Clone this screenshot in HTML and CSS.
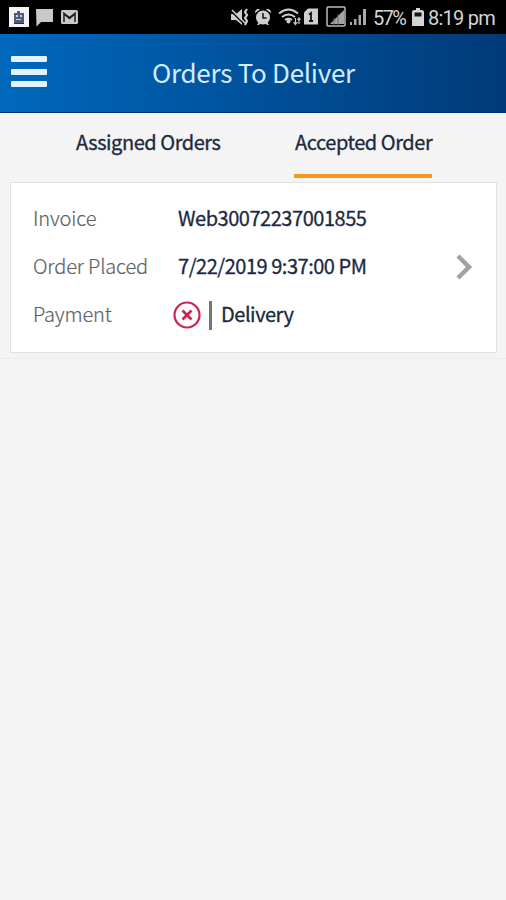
FILE: index.html
```html
<!DOCTYPE html>
<html lang="en">
<head>
  <meta charset="UTF-8" />
  <meta name="viewport" content="width=device-width, initial-scale=1.0" />
  <title>Orders To Deliver</title>
  <link rel="stylesheet" href="styles.css">
</head>
<body>
  <div class="status-bar">
    <svg class="notifications" width="80" height="34" viewBox="0 0 80 34">
      <rect x="9" y="7" width="20" height="20" fill="#f4f4f4" />
      <path d="M14 13h3v-2h3v2h4v10H14z" fill="#506078" />
      <path d="M16 15h2v2h-2zM20 15h2v2h-2zM16 19h5v1h-5z" fill="#c5d0dc" />
      <path d="M14 23.500h10" stroke="#333" />
      <path d="M36 9h17v13H41l-4.500 4.500z" fill="#c9c9c9" />
      <rect x="61" y="10" width="17" height="14" rx="1.500" fill="#c9c9c9" />
      <path d="M64 22v-8l5.500 4.500L75 14v8M63 12.500l6.500 5 6.500-5" fill="none" stroke="#222" stroke-width="1.500" />
    </svg>
    <svg class="system-icons" width="140" height="34" viewBox="230 0 140 34">
      <g fill="#cfcfcf">
        <path d="M231 14h5l6-5v16l-6-5h-5z" />
        <circle cx="263" cy="17.500" r="7" />
        <path d="M255 13c-.5-3 2.500-5 5-3.500zM271 13c.5-3-2.500-5-5-3.500zM257 25l2-3 2 1-2 2zM269 25l-2-3-2 1 2 2z" />
        <circle cx="288.500" cy="21.500" r="2" />
        <path d="M308 8.500h10v16h-14v-12z" />
        <path d="M344 10v14h-14z" fill="#a5a5a5" />
        <path d="M350 22h2v3h-2zM354 19h2.500v6H354zM358.500 15h2.500v10h-2.500zM363 9h3v16h-3z" fill="#aaa" />
      </g>
      <path d="M231.500 11.500l13 13" stroke="#000" stroke-width="1.500" />
      <path d="M232 10l13 13" stroke="#cfcfcf" stroke-width="1.500" />
      <path d="M247 9l-2 3 2 3-2 3 2 3-2 4" fill="none" stroke="#cfcfcf" stroke-width="2.200" />
      <path d="M263 13v5h3.500" fill="none" stroke="#111" stroke-width="1.500" />
      <path d="M279 13.500q9.500-8 19 0M282 17q6.500-5 13 0M285 20q3.500-2.500 7 0" fill="none" stroke="#cfcfcf" stroke-width="2" />
      <path d="M295.500 18v6M293.500 22l2 2.500 2-2.500M299 24v-6M297.500 20l1.500-2 1.500 2" fill="none" stroke="#cfcfcf" stroke-width="1.200" />
      <path d="M309 14.500l2-1.500v8M309 21h4" fill="none" stroke="#111" stroke-width="1.800" />
      <rect x="327" y="7" width="18" height="19" rx="1" fill="none" stroke="#bbb" stroke-width="1.500" />
      <path d="M334 18v8M338 14v12" stroke="#666" />
    </svg>
    <span class="battery-text">57%</span>
    <svg class="battery" width="12" height="18" viewBox="0 0 12 18">
      <path d="M4 0h4v2h2.500L12 3.500V18H0V3.500L1.500 2H4z" fill="#d5d5d5" />
      <path d="M2.500 4.500h7v4h-7z" fill="#161616" />
    </svg>
    <span class="time">8:19 pm</span>
  </div>

  <div class="header">
    <div class="menu">
      <span></span>
      <span></span>
      <span></span>
    </div>
    <h1>Orders To Deliver</h1>
  </div>

  <div class="tabs">
    <a class="tab assigned">Assigned Orders</a>
    <a class="tab accepted active">Accepted Order</a>
  </div>

  <div class="order-list">
    <div class="card">
      <div class="details">
        <div class="row">
          <span class="label">Invoice</span>
          <span class="value invoice">Web30072237001855</span>
        </div>
        <div class="row">
          <span class="label">Order Placed</span>
          <span class="value date">7/22/2019 9:37:00 PM</span>
        </div>
        <div class="row">
          <span class="label payment">Payment</span>
          <svg class="unpaid" width="28" height="28" viewBox="0 0 28 28">
            <circle cx="14" cy="14" r="12.500" />
            <path d="M9.500 9.500l9 9M18.500 9.500l-9 9" />
          </svg>
          <span class="divider"></span>
          <span class="value delivery">Delivery</span>
        </div>
      </div>
      <svg class="arrow" width="18" height="28" viewBox="0 0 18 28">
        <path d="M3 3l11 11L3 25" />
      </svg>
    </div>
  </div>
</body>
</html>
```

FILE: styles.css
```css
* {
  box-sizing: border-box;
}
body {
  margin: 0;
  font-family: "Noto Sans CJK SC", "Noto Sans", sans-serif;
  background: #f4f4f4;
  color: #1c2940;
}
.status-bar {
  display: flex;
  align-items: center;
  height: 34px;
  background: #000;
  color: #d5d5d5;
  font-family: Roboto, sans-serif;
  font-size: 20px;
  line-height: 34px;
  white-space: nowrap;
}
.system-icons {
  margin-left: 150px;
}
.battery-text {
  width: 42px;
  padding-left: 3px;
  padding-top: 2px;
  letter-spacing: -1.6px;
}
.time {
  margin-left: 4px;
  padding-top: 2px;
  letter-spacing: -0.75px;
}
.header {
  display: flex;
  align-items: center;
  height: 79px;
  padding: 0 0 3px 11px;
  background: linear-gradient(to right, #0068bd, #003a78);
  border-bottom: 1px solid #002f80;
}
.menu {
  width: 36px;
  height: 31px;
  display: flex;
  flex-direction: column;
  justify-content: space-between;
}
.menu span {
  height: 6px;
  border-radius: 1px;
  background: #e3f2ff;
}
.header h1 {
  margin: 0 0 0 105px;
  font-size: 26px;
  font-weight: 400;
  line-height: 40px;
  letter-spacing: -0.28px;
  color: #d5eaff;
}
.tabs {
  display: flex;
  height: 65px;
  padding-left: 76px;
}
.tab {
  height: 65px;
  font-size: 20px;
  line-height: 57px;
  letter-spacing: -0.45px;
  white-space: nowrap;
  -webkit-text-stroke: 0.3px #1c2940;
}
.assigned {
  width: 145px;
}
.accepted {
  width: 138px;
  margin-left: 73px;
  text-indent: 1px;
}
.active {
  border-bottom: 4px solid #f7981d;
}
.order-list {
  height: 181px;
  padding: 4px 9px 0 10px;
  border-bottom: 1px solid #ebebeb;
}
.card {
  display: flex;
  align-items: center;
  height: 171px;
  padding-left: 22px;
  background: #fff;
  border: 1px solid #e1e1e1;
}
.details {
  width: 422px;
  height: 168px;
  padding-top: 10px;
}
.row {
  display: flex;
  align-items: center;
  height: 48px;
  font-size: 20px;
  line-height: 48px;
  white-space: nowrap;
}
.label {
  width: 145px;
  color: #5c6268;
  font-weight: 300;
  letter-spacing: -0.15px;
  -webkit-text-stroke: 0.2px #5c6268;
}
.value {
  letter-spacing: -0.47px;
  -webkit-text-stroke: 0.3px #1c2940;
}
.payment {
  width: 140px;
}
.unpaid {
  margin-top: 2px;
  fill: none;
  stroke: #cf2450;
  stroke-width: 2.2;
}
.unpaid path {
  stroke-width: 2.8;
}
.divider {
  width: 3px;
  height: 29px;
  margin: 4px 9px 0 8px;
  background: #777;
}
.arrow {
  margin-bottom: 2px;
  fill: none;
  stroke: #a2a2a2;
  stroke-width: 4.5;
}
```
